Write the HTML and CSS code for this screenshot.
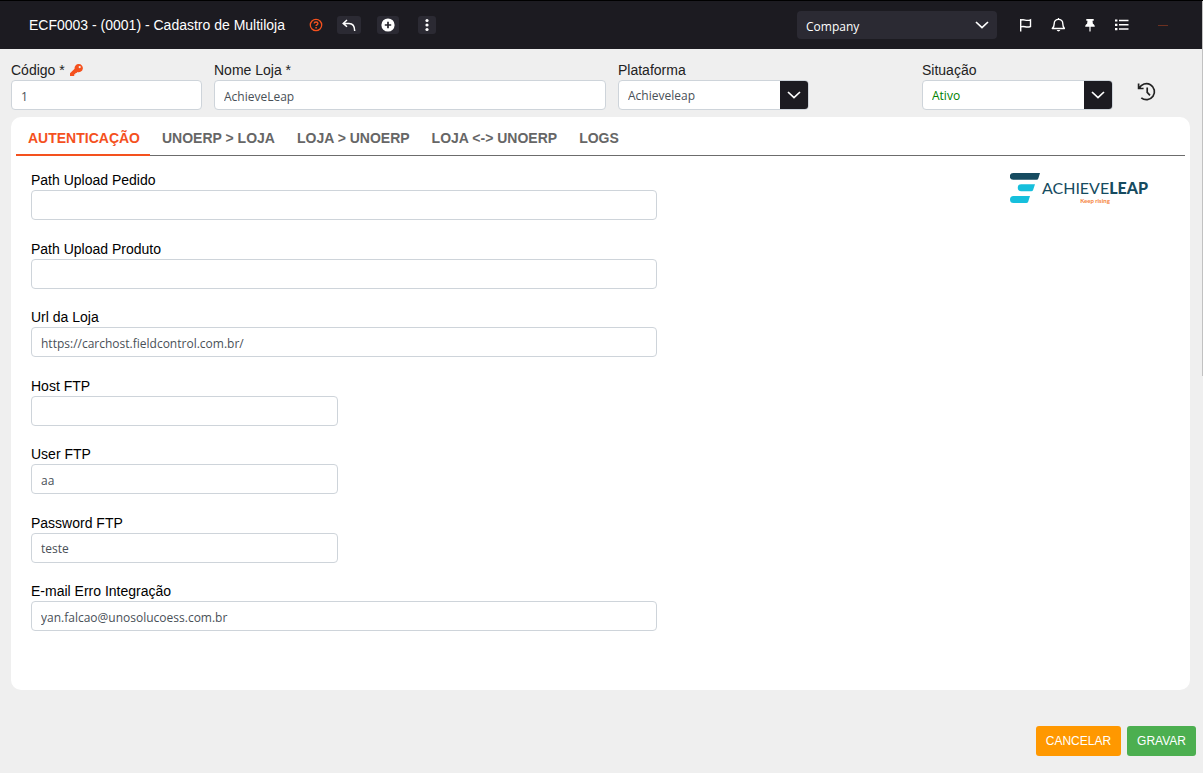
FILE: index.html
```html
<!DOCTYPE html>
<html lang="pt-BR">
<head>
<meta charset="utf-8">
<meta name="viewport" content="width=device-width, initial-scale=1">
<title>Cadastro de Multiloja</title>
<link rel="stylesheet" href="styles.css">
</head>
<body>
<div class="page">
  <header class="topbar">
    <h1 class="title">ECF0003 - (0001) - Cadastro de Multiloja</h1>
    <div class="actions">
      <button class="icon-btn help" type="button" aria-label="Ajuda">
        <svg width="14" height="14" viewBox="0 0 14 14" fill="none" stroke="#f4511e" stroke-width="1.3"><circle cx="7" cy="7" r="5.7"/><path d="M5.2 5.6c0-2.2 3.7-2.2 3.7 0 0 1.2-1.8 1.2-1.8 2.4" stroke-width="1.4"/><path d="M7.1 9v1.5" stroke-width="1.5"/></svg>
      </button>
      <button class="icon-btn boxed back" type="button" aria-label="Voltar">
        <svg width="14" height="13" viewBox="0 0 14 13" fill="none" stroke="#fff" stroke-width="1.5"><path d="M5 1 1.2 4.4 5 7.8M1.2 4.4H7c3.600 0 5.700 3 5.700 7.600"/></svg>
      </button>
      <button class="icon-btn boxed add" type="button" aria-label="Novo">
        <svg width="14" height="14" viewBox="0 0 14 14"><circle cx="7" cy="7" r="6.600" fill="#fff"/><path d="M7 3.800v6.400M3.800 7h6.400" stroke="#25242c" stroke-width="1.700"/></svg>
      </button>
      <button class="icon-btn boxed more" type="button" aria-label="Mais opções">
        <svg width="4" height="14" viewBox="0 0 4 14" fill="#fff"><circle cx="2" cy="2.500" r="1.600"/><circle cx="2" cy="7" r="1.600"/><circle cx="2" cy="11.500" r="1.600"/></svg>
      </button>
    </div>
    <div class="company">
      <select aria-label="Empresa"><option>Company</option></select>
      <svg class="chevron" width="14" height="8" viewBox="0 0 14 8" fill="none" stroke="#fff" stroke-width="1.700"><path d="m1 1 6 5.700L13 1"/></svg>
    </div>
    <nav class="tools" aria-label="Ferramentas">
      <button class="icon-btn" type="button" aria-label="Marcar">
        <svg width="14" height="14" viewBox="0 0 14 14" fill="none" stroke="#fff" stroke-width="1.400"><path d="M1.700 13.500V1M1.700 2.200c3.800-1.500 5.200 1.400 9.800-.4v6.700c-4.600 1.800-6-1.100-9.800.4"/></svg>
      </button>
      <button class="icon-btn" type="button" aria-label="Notificações">
        <svg width="14" height="14" viewBox="0 0 14 14" fill="none" stroke="#fff" stroke-width="1.400" stroke-linejoin="round"><path d="M7.500 0v1.500M1.300 10.500C2.800 8.900 3.200 7.500 3.200 5.700c0-2.500 1.900-4.300 4.300-4.300s4.300 1.800 4.300 4.300c0 1.800.4 3.200 1.700 4.800z"/><path d="M5.700 12c.7 1.900 2.900 1.900 3.600 0z" fill="#fff" stroke="none"/></svg>
      </button>
      <button class="icon-btn" type="button" aria-label="Fixar">
        <svg width="14" height="14" viewBox="0 0 14 14" fill="#fff"><path d="M3.300 1h7.400v1.800H9.500l.4 3c1.200.6 1.900 1.600 1.900 2.900H2.200c0-1.300.7-2.300 1.900-2.900l.4-3H3.300zM6.400 8.700h1.200V13L7 14l-.6-1z"/></svg>
      </button>
      <button class="icon-btn" type="button" aria-label="Lista">
        <svg width="14" height="14" viewBox="0 0 14 14" stroke="#fff"><path d="M4 2.500h9.500M4 6.800h9.500M4 11.100h9.500" stroke-width="1.500"/><path d="M0 2.500h2.400M0 6.800h2.400M0 11.100h2.400" stroke-width="2.200"/></svg>
      </button>
    </nav>
    <span class="dash" aria-hidden="true"></span>
  </header>

  <main class="content">
    <form class="form" id="store">
      <div class="summary">
        <div class="field">
          <label for="code">Código * <svg class="key" width="13" height="12" viewBox="0 0 13 12"><path fill="#f4511e" fill-rule="evenodd" d="M8.700 0a4.100 4.100 0 1 1-1.200 8L6.600 9H5.400v1.200H4.200V12H0V9.200l4.600-4.500A4.100 4.100 0 0 1 8.700 0zm1 2a1.100 1.100 0 1 0 0 2.200 1.100 1.100 0 0 0 0-2.200z"/></svg></label>
          <input class="control" id="code" type="text" value="1">
        </div>
        <div class="field">
          <label for="name">Nome Loja *</label>
          <input class="control" id="name" type="text" value="AchieveLeap">
        </div>
        <div class="field">
          <label for="platform">Plataforma</label>
          <div class="picker">
            <select class="control" id="platform"><option>Achieveleap</option></select>
            <span class="arrow"><svg width="14" height="8" viewBox="0 0 14 8" fill="none" stroke="#fff" stroke-width="1.700"><path d="m1 1 6 5.700L13 1"/></svg></span>
          </div>
        </div>
        <div class="field status">
          <label for="status">Situação</label>
          <div class="picker">
            <select class="control active" id="status"><option>Ativo</option></select>
            <span class="arrow"><svg width="14" height="8" viewBox="0 0 14 8" fill="none" stroke="#fff" stroke-width="1.700"><path d="m1 1 6 5.700L13 1"/></svg></span>
          </div>
        </div>
        <button class="icon-btn history" type="button" aria-label="Histórico">
          <svg width="20" height="20" viewBox="0 0 20 20" fill="none" stroke="#222" stroke-width="1.700"><path d="M1.600 1.500v5h5M2.200 6.300A8 8 0 1 1 4.300 15.800M10.200 5.500v4.900l2.800 3"/></svg>
        </button>
      </div>

      <section class="card">
        <div class="tabs" role="tablist">
          <button class="tab selected" type="button" role="tab" aria-selected="true">AUTENTICAÇÃO</button>
          <button class="tab" type="button" role="tab" aria-selected="false">UNOERP &gt; LOJA</button>
          <button class="tab" type="button" role="tab" aria-selected="false">LOJA &gt; UNOERP</button>
          <button class="tab" type="button" role="tab" aria-selected="false">LOJA &lt;-&gt; UNOERP</button>
          <button class="tab" type="button" role="tab" aria-selected="false">LOGS</button>
        </div>
        <div class="panel" role="tabpanel">
          <div class="fields">
            <div class="field"><label for="order-path">Path Upload Pedido</label><input class="control" id="order-path" type="text"></div>
            <div class="field"><label for="product-path">Path Upload Produto</label><input class="control" id="product-path" type="text"></div>
            <div class="field"><label for="url">Url da Loja</label><input class="control" id="url" type="text" value="https://carchost.fieldcontrol.com.br/"></div>
            <div class="field half"><label for="host">Host FTP</label><input class="control" id="host" type="text"></div>
            <div class="field half"><label for="user">User FTP</label><input class="control" id="user" type="text" value="aa"></div>
            <div class="field half"><label for="pass">Password FTP</label><input class="control" id="pass" type="text" value="teste"></div>
            <div class="field"><label for="mail">E-mail Erro Integração</label><input class="control" id="mail" type="text" value="yan.falcao@unosolucoess.com.br"></div>
          </div>
          <div class="brand">
            <svg width="30" height="32" viewBox="0 0 30 32"><path fill="#164b60" d="M3.200 1H30l-1.600 5.200Q28 7.800 26.500 7.800H3.200A3.400 3.400 0 0 1 3.200 1z"/><path fill="#16bfdc" d="M11.200 12.300H25l-1.800 5.400q-.5 1.500-2 1.500h-10a3.400 3.400 0 0 1 0-6.900zM3.500 24H20l-1.800 5.700Q17.700 31 16.200 31H3.500a3.500 3.500 0 0 1 0-7z"/></svg>
            <div class="brand-text">
              <span class="brand-name">ACHIEVE<b>LEAP</b></span>
              <span class="brand-tag">Keep rising</span>
            </div>
          </div>
        </div>
      </section>
    </form>
  </main>

  <footer class="footer">
    <button class="btn cancel" type="button">CANCELAR</button>
    <button class="btn save" type="submit" form="store">GRAVAR</button>
  </footer>
</div>
<div class="scroll-thumb"></div>
</body>
</html>
```
FILE: styles.css
```css
* { box-sizing: border-box; }
body {
  margin: 0;
  background: #efefef;
  color: #000;
  font: 14px/20px "Liberation Sans", Arial, sans-serif;
}
button, input, select { font: inherit; margin: 0; }
svg { display: block; flex: none; }
.page { min-height: 100vh; display: flex; flex-direction: column; }

.topbar {
  display: flex;
  align-items: center;
  min-height: 49px;
  padding: 0 35px 0 29px;
  border-top: 1px solid #000;
  background: #1c1b21;
  color: #fff;
}
.title { margin: 0; font-size: 14px; font-weight: 400; white-space: nowrap; }
.icon-btn {
  display: flex;
  align-items: center;
  justify-content: center;
  padding: 0;
  border: 0;
  background: none;
}
.actions { display: flex; align-items: center; margin-left: 24px; }
.boxed { height: 18px; border-radius: 3px; background: #2b2a33; }
.back { width: 24px; margin-left: 14px; }
.add { width: 22px; margin-left: 16px; }
.more { width: 18px; margin-left: 19px; }
.company { position: relative; width: 200px; margin-left: auto; }
.company select {
  appearance: none;
  display: block;
  width: 100%;
  height: 28px;
  padding: 3px 36px 0 9px;
  border: 0;
  border-radius: 4px;
  background: #2b2a33;
  color: #fff;
  font: 12px/20px "Open Sans", sans-serif;
}
.chevron { position: absolute; right: 8px; top: 10px; pointer-events: none; }
.tools { display: flex; gap: 18px; margin-left: 22px; }
.dash { width: 10px; height: 1px; margin-left: 29px; background: #6b3020; }

.content, .form { flex: 1; display: flex; flex-direction: column; }
.form { padding: 11px 13px 0 11px; }
.summary {
  display: grid;
  grid-template-columns: 191fr 392fr 191fr 89fr 191fr 65fr;
  gap: 12px;
  margin-bottom: 7px;
  color: #222;
}
.field { display: flex; flex-direction: column; min-width: 0; }
.field label { display: flex; align-items: center; gap: 5px; }
.control {
  width: 100%;
  height: 30px;
  padding: 2px 9px 0;
  border: 1px solid #ced4da;
  border-radius: 4px;
  background: #fff;
  color: #495057;
  font: 12px/20px "Open Sans", sans-serif;
}
.picker { position: relative; }
.picker .control { appearance: none; display: block; padding-right: 36px; }
.picker .active { color: #008000; }
.arrow {
  position: absolute;
  top: 1px;
  right: 1px;
  bottom: 1px;
  width: 28px;
  display: flex;
  align-items: center;
  justify-content: center;
  border-radius: 0 3px 3px 0;
  background: #1c1b21;
  pointer-events: none;
}
.status { grid-column: 5; }
.history { justify-self: start; align-self: end; padding: 0 0 8px 12px; }

.card {
  flex: 1;
  display: flex;
  flex-direction: column;
  padding: 0 5px 59px;
  border-radius: 10px;
  background: #fff;
}
.tabs { display: flex; border-bottom: 1px solid #6c6c6c; }
.tab {
  height: 39px;
  margin-bottom: -1px;
  padding: 5px 10px 0 12px;
  border: 0;
  border-bottom: 2px solid transparent;
  background: none;
  color: #666;
  font-weight: 700;
  white-space: nowrap;
}
.tab.selected { border-color: #f4511e; color: #f4511e; }
.panel {
  flex: 1;
  display: flex;
  justify-content: space-between;
  padding: 14px 37px 0 15px;
}
.fields {
  width: 56%;
  display: flex;
  flex-direction: column;
  justify-content: space-between;
  gap: 8px;
}
.half { width: 49%; }

.brand { display: flex; align-items: flex-start; gap: 2px; padding-top: 2px; }
.brand-text {
  display: flex;
  flex-direction: column;
  padding-top: 6px;
  color: #164b60;
  font-family: Lato, sans-serif;
}
.brand-name { font-size: 16px; line-height: 20px; }
.brand-name b { font-weight: 900; }
.brand-tag { color: #f5813a; font-size: 6px; font-weight: 700; line-height: 6px; text-align: center; }

.footer { display: flex; justify-content: flex-end; gap: 6px; padding: 36px 7px 17px; }
.btn {
  height: 30px;
  padding: 0 10px;
  border: 0;
  border-radius: 3px;
  color: #fff;
  font-size: 12px;
}
.cancel { background: #ff9800; }
.save { background: #4caf50; }

.scroll-thumb {
  position: fixed;
  top: 1px;
  right: 0;
  width: 1px;
  height: 48.5vh;
  background: #c1c1c1;
}
```
